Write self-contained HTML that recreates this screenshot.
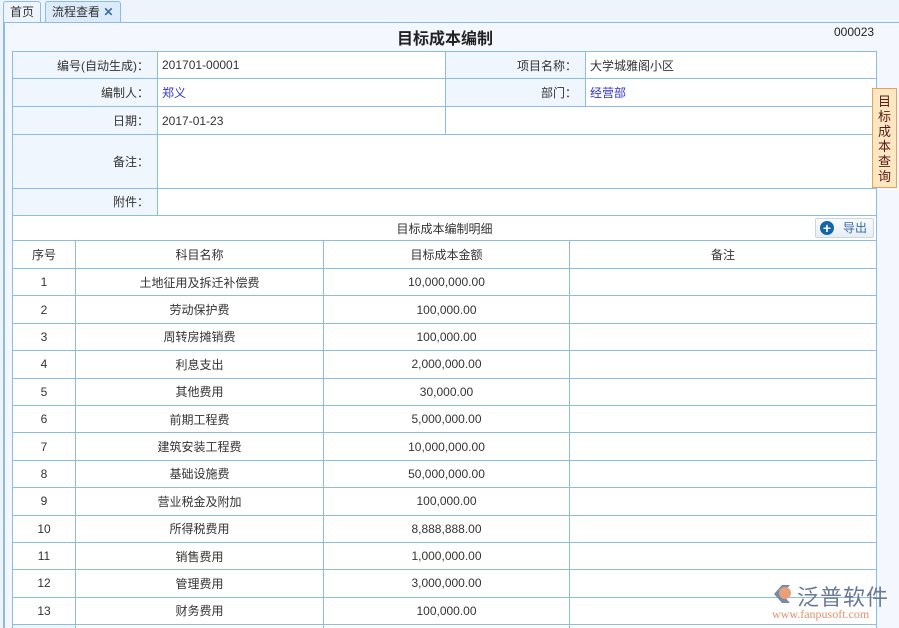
<!DOCTYPE html>
<html><head><meta charset="utf-8"><style>
*{margin:0;padding:0;box-sizing:border-box}
html,body{width:899px;height:628px;overflow:hidden}
body{background:#eef4fc;font-family:"Liberation Sans","Noto Sans CJK SC",sans-serif;font-size:12px;color:#333;position:relative}
.tab{position:absolute;top:1px;height:22px;border:1px solid #8cbbe8;border-bottom:none;border-radius:3px 3px 0 0;background:#eef4fc;line-height:21px;font-size:12px;padding:0 6px;color:#333;white-space:nowrap}
.panel{position:absolute;left:3px;top:22px;width:896px;height:606px;border-top:1px solid #8cbbe8;border-left:2px solid #8cbbe8;background:#f4f8fe}
.title{position:absolute;left:0;width:890px;top:25px;text-align:center;font-size:16px;font-weight:bold;color:#222}
.num{position:absolute;left:834px;top:25px;font-size:12px;color:#222}
table{border-collapse:collapse;position:absolute;left:12px;width:865px;background:#fff;table-layout:fixed}
td{border:1px solid #8cbbe8;height:27.4px;padding:0 4px;font-size:12px}
.l{background:#f0f6fd;text-align:right;padding-right:8px}
.c{text-align:center}
.blue{color:#3333cc}
.side{position:absolute;left:872px;top:88px;width:25px;height:100px;background:#fbe8c2;border:1px solid #e4a45a;color:#5a1a1a;font-size:13px;line-height:15px;text-align:center;padding-top:5px}
.btn{position:absolute;left:815px;top:218px;width:59px;height:20px;border:1px solid #ccd6e0;border-radius:2px;background:linear-gradient(#fafcfe,#e8eef4);font-size:12px;color:#3a6aa0;line-height:18px;padding-left:27px}
.btn i{position:absolute;left:4px;top:2px;width:14px;height:14px;border-radius:50%;background:#1366a8;color:#fff;font-style:normal;font-weight:bold;font-size:14px;line-height:14px;text-align:center}
</style></head><body>
<div class="tab" style="left:3px;width:38px">首页</div>
<div class="tab" style="left:45px;width:76px;background:#dcebfa">流程查看 <b style="color:#3b6fa3">✕</b></div>
<div class="panel"></div>
<div class="title">目标成本编制</div>
<div class="num">000023</div>
<table style="top:51px">
<colgroup><col style="width:145px"><col style="width:288px"><col style="width:140px"><col></colgroup>
<tr><td class="l" style="height:27px">编号(自动生成)：</td><td>201701-00001</td><td class="l">项目名称：</td><td>大学城雅阁小区</td></tr>
<tr><td class="l" style="height:28px">编制人：</td><td class="blue">郑义</td><td class="l">部门：</td><td class="blue">经营部</td></tr>
<tr><td class="l" style="height:27px">日期：</td><td>2017-01-23</td><td colspan="2"></td></tr>
<tr><td class="l" style="height:54px">备注：</td><td colspan="3"></td></tr>
<tr><td class="l" style="height:27px">附件：</td><td colspan="3"></td></tr>
<tr><td colspan="4" class="c" style="height:26px">目标成本编制明细</td></tr>
</table>
<table style="top:240px">
<colgroup><col style="width:63px"><col style="width:248px"><col style="width:246px"><col></colgroup>
<tr><td class="c" style="height:28px">序号</td><td class="c">科目名称</td><td class="c">目标成本金额</td><td class="c">备注</td></tr>
<tr><td class="c">1</td><td class="c">土地征用及拆迁补偿费</td><td class="c">10,000,000.00</td><td></td></tr>
<tr><td class="c">2</td><td class="c">劳动保护费</td><td class="c">100,000.00</td><td></td></tr>
<tr><td class="c">3</td><td class="c">周转房摊销费</td><td class="c">100,000.00</td><td></td></tr>
<tr><td class="c">4</td><td class="c">利息支出</td><td class="c">2,000,000.00</td><td></td></tr>
<tr><td class="c">5</td><td class="c">其他费用</td><td class="c">30,000.00</td><td></td></tr>
<tr><td class="c">6</td><td class="c">前期工程费</td><td class="c">5,000,000.00</td><td></td></tr>
<tr><td class="c">7</td><td class="c">建筑安装工程费</td><td class="c">10,000,000.00</td><td></td></tr>
<tr><td class="c">8</td><td class="c">基础设施费</td><td class="c">50,000,000.00</td><td></td></tr>
<tr><td class="c">9</td><td class="c">营业税金及附加</td><td class="c">100,000.00</td><td></td></tr>
<tr><td class="c">10</td><td class="c">所得税费用</td><td class="c">8,888,888.00</td><td></td></tr>
<tr><td class="c">11</td><td class="c">销售费用</td><td class="c">1,000,000.00</td><td></td></tr>
<tr><td class="c">12</td><td class="c">管理费用</td><td class="c">3,000,000.00</td><td></td></tr>
<tr><td class="c">13</td><td class="c">财务费用</td><td class="c">100,000.00</td><td></td></tr>
<tr><td style="background:#f0f6fd"></td><td></td><td></td><td></td></tr>
</table>
<div class="btn"><i>+</i>导出</div>
<div class="side">目<br>标<br>成<br>本<br>查<br>询</div>
<div style="position:absolute;left:770px;top:583px;width:24px;height:22px;">
<svg width="24" height="22"><path d="M4 11 L12 2 L20 2 L12 11 L20 20 L12 20 Z" fill="#7a8aa6"/><circle cx="15" cy="10" r="6" fill="#e8a078"/></svg></div>
<div style="position:absolute;left:797px;top:580px;font-size:22px;color:#6a7a96;letter-spacing:1px">泛普软件</div>
<div style="position:absolute;left:772px;top:607px;font-size:12px;color:#e09070;font-family:'Liberation Serif',serif">www.fanpusoft.com</div>
</body></html>
